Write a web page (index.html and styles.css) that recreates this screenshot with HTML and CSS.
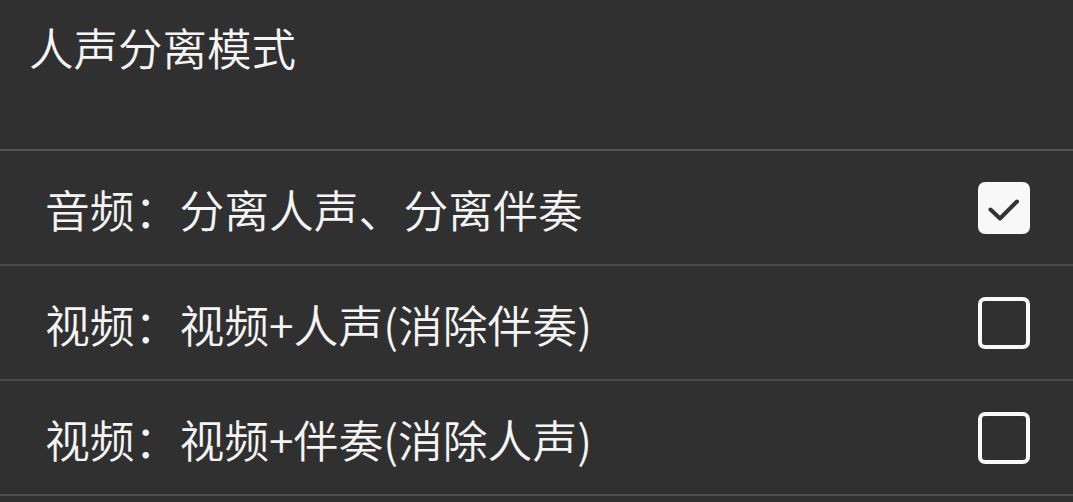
FILE: index.html
```html
<!DOCTYPE html>
<html lang="zh-CN">
<head>
<meta charset="utf-8">
<title>人声分离模式</title>
<link rel="stylesheet" href="styles.css">
</head>
<body>
<div class="page">
  <header class="header">
    <h1 class="title">人声分离模式</h1>
  </header>
  <ul class="options">
    <li class="option">
      <span class="label">音频：分离人声、分离伴奏</span>
      <span class="box checked">
        <svg viewBox="0 0 52 52" width="52" height="52"><path d="M12.5 27.5 L22 36.5 L39 19.5" fill="none" stroke="#333" stroke-width="4" stroke-linecap="round" stroke-linejoin="round"/></svg>
      </span>
    </li>
    <li class="option">
      <span class="label">视频：视频+人声(消除伴奏)</span>
      <span class="box"></span>
    </li>
    <li class="option">
      <span class="label">视频：视频+伴奏(消除人声)</span>
      <span class="box"></span>
    </li>
  </ul>
</div>
</body>
</html>
```

FILE: styles.css
```css
html, body {
  margin: 0;
  padding: 0;
  background: #303030;
}
.page {
  width: 1073px;
  height: 502px;
  overflow: hidden;
  background: #303030;
  font-family: "Noto Sans CJK SC", "Noto Sans", sans-serif;
  color: #f4f4f4;
}
.header {
  height: 149px;
  box-sizing: border-box;
  padding: 25px 0 0 29px;
}
.title {
  margin: 0;
  font-size: 44.5px;
  line-height: 44px;
  font-weight: 350;
}
.options {
  list-style: none;
  margin: 0;
  padding: 0;
  border-bottom: 2px solid #4e4e4e;
}
.option {
  height: 115px;
  box-sizing: border-box;
  border-top: 2px solid #555555;
  display: flex;
  align-items: center;
  justify-content: space-between;
  padding: 0 43px 0 45px;
}
.option + .option {
  border-top-color: #4a4a4a;
}
.label {
  font-size: 44.8px;
  line-height: 1;
  font-weight: 350;
  padding-top: 3px;
}
.box {
  width: 52px;
  height: 52px;
  box-sizing: border-box;
  border: 4px solid #f8f8f8;
  border-radius: 7px;
  display: flex;
  align-items: center;
  justify-content: center;
}
.box.checked {
  background: #f8f8f8;
  border: none;
}
.box svg {
  display: block;
}
```
